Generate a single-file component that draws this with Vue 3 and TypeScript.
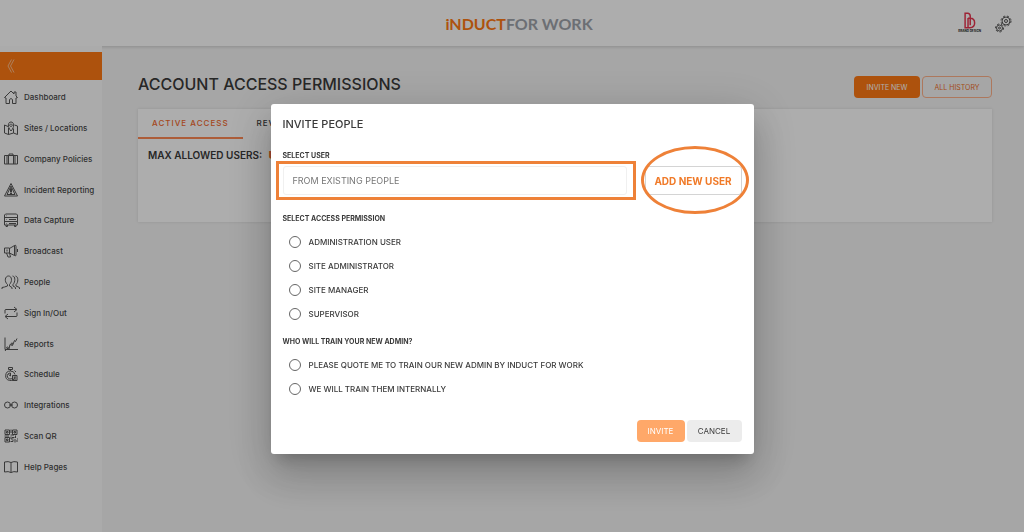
<script setup lang="ts">
import { ref } from 'vue'

interface NavItem {
  label: string
  icon: string
}

const navItems: NavItem[] = [
  { label: 'Dashboard', icon: 'home' },
  { label: 'Sites / Locations', icon: 'map' },
  { label: 'Company Policies', icon: 'case' },
  { label: 'Incident Reporting', icon: 'warning' },
  { label: 'Data Capture', icon: 'server' },
  { label: 'Broadcast', icon: 'megaphone' },
  { label: 'People', icon: 'people' },
  { label: 'Sign In/Out', icon: 'loop' },
  { label: 'Reports', icon: 'chart' },
  { label: 'Schedule', icon: 'stopwatch' },
  { label: 'Integrations', icon: 'link' },
  { label: 'Scan QR', icon: 'qr' },
  { label: 'Help Pages', icon: 'book' },
]

// Stroke paths on a 28 x 28 grid
const icons: Record<string, string> = {
  home: 'M1 15 L14 2 L20 8 V4 H24 V12 L27 15 L24 16 V27 H17 V19 Q14 15 11 19 V27 H4 V16 Z',
  map: 'M8 11 L1 8 V24 L9 27 L19 24 L27 27 V10 L21 8 M9 14 V27 M19 15 V24 M14 20 C6 11 8 2 14 2 C20 2 22 11 14 20 Z M14 6 A2.5 2.5 0 1 1 13.9 6',
  case: 'M1 7 H27 V24 H1 Z M6 7 V24 M9 7 V24 M19 7 V24 M22 7 V24 M10 7 V4 H18 V7',
  warning: 'M14 1 L27 26 H1 Z M14 6 L22 23 H6 Z M13 11 H15 V18 H13 Z M13 20 H15 V22 H13 Z',
  server: 'M3 2 H25 L27 4 V24 H1 V4 Z M1 9 H27 M1 17 H27 M5 5.5 H6 M5 13 H6 M5 21 H6 M10 13 H24 M10 21 H24 M4 24 V27 H7 V24 M21 24 V27 H24 V24',
  megaphone: 'M1 8 H11 V18 H1 Z M11 9 L21 3 V23 L11 18 M21 3 Q24 1 24 5 V22 Q24 25 21 23 M5 18 L8 26 H13 L11 18 M6 11 V15 M27 10 V16',
  people: 'M7 19 C0 13 2 2 9 2 C16 2 17 13 11 19 V22 M7 19 V22 L1 24 L-4 25 V28 M11 22 L16 25 V28 M17 2 C23 2 23 14 18 19 V22 L23 25 V28 M23 2 C29 3 29 15 24 19 V22 L31 25 V28',
  loop: 'M2 15 V8 Q2 7 4 7 H25 M20 2 L26 7 L20 12 M26 13 V20 Q26 21 24 21 H3 M8 16 L2 21 L8 26',
  chart: 'M2 1 V25 H28 M2 28 L6 23 L10 24 L12 15 L17 17 L21 7 L23 9 L26 3 M7 20 A1.5 1.5 0 1 1 6.9 20 M16 12 A1.5 1.5 0 1 1 15.9 12',
  stopwatch: 'M9 1 H17 V5 H9 Z M13 5 V8 M13 8 A9.5 9.5 0 1 0 22 20 M13 8 A9 9 0 0 1 22 15 M13 12 V18 L9 15 M13 12 A6 6 0 1 0 17 22 M17 17 H26 V27 H17 Z M19 20 H24 M19 24 H24 M21 7 L24 10',
  link: 'M7 8 A6 6 0 1 0 13 14 A6 6 0 0 0 7 8 M21 8 A6 6 0 1 0 27 14 A6 6 0 0 0 21 8 M10 14 H18',
  qr: 'M2 2 H11 V11 H2 Z M17 2 H26 V11 H17 Z M2 17 H11 V26 H2 Z M5 5 H8 V8 H5 Z M20 5 H23 V8 H20 Z M5 20 H8 V23 H5 Z M14 1 V8 M13 12 H20 M23 13 V18 M1 14 H10 M14 15 V20 H19 M13 25 H18 V22 M22 20 V27 M24 24 H28 M26 20 H28 M16 17 H21',
  book: 'M14 5 Q9 2 1 4 V24 Q9 22 14 25 Q19 22 27 24 V4 Q19 2 14 5 V25',
}

const roles: string[] = ['ADMINISTRATION USER', 'SITE ADMINISTRATOR', 'SITE MANAGER', 'SUPERVISOR']
const trainers: string[] = [
  'PLEASE QUOTE ME TO TRAIN OUR NEW ADMIN BY INDUCT FOR WORK',
  'WE WILL TRAIN THEM INTERNALLY',
]

const user = ref('')
const role = ref('')
const trainer = ref('')
</script>

<template>
  <div class="page">
    <header class="topbar">
      <span></span>
      <a class="brand" href="#"><span class="brand-main">iNDUCT</span>FOR WORK</a>
      <div class="account">
        <a class="client" href="#">
          <svg viewBox="0 0 30 46" width="11" height="17" aria-hidden="true">
            <path d="M11 43 H3 V3 H11 Q17 4 17 11 V36 M11 16 V43 H16 Q29 42 29 30 Q29 17 17 17 H11" />
          </svg>
          <span>BRAND DESIGN</span>
        </a>
        <button class="gear" type="button" aria-label="Settings">
          <svg viewBox="0 0 34 34" width="17" height="17" aria-hidden="true">
            <circle class="teeth" cx="22" cy="12" r="10" />
            <circle cx="22" cy="12" r="8" />
            <circle cx="22" cy="12" r="3" />
            <circle class="teeth" cx="9" cy="26" r="8" />
            <circle cx="9" cy="26" r="6" />
            <circle cx="9" cy="26" r="2" />
          </svg>
        </button>
      </div>
    </header>

    <div class="body">
      <aside class="sidebar">
        <button class="collapse" type="button" aria-label="Collapse menu">
          <svg viewBox="0 0 16 28" width="8" height="14" aria-hidden="true">
            <path d="M9 1 L2 14 L9 27 M14 1 L7 14 L14 27" />
          </svg>
        </button>
        <nav class="nav">
          <a v-for="item in navItems" :key="item.label" href="#">
            <svg viewBox="0 0 28 28" width="14" height="14" aria-hidden="true"><path :d="icons[item.icon]" /></svg>
            <span>{{ item.label }}</span>
          </a>
        </nav>
      </aside>

      <main class="main">
        <div class="heading">
          <h1>ACCOUNT ACCESS PERMISSIONS</h1>
          <div class="heading-actions">
            <button class="solid" type="button">INVITE NEW</button>
            <button class="outline" type="button">ALL HISTORY</button>
          </div>
        </div>
        <section class="card">
          <div class="tabs">
            <button class="tab active" type="button">ACTIVE ACCESS</button>
            <button class="tab" type="button">REV</button>
          </div>
          <p class="limit">MAX ALLOWED USERS: <b>U</b></p>
        </section>
      </main>
    </div>

    <div class="overlay">
      <form class="modal" role="dialog" aria-labelledby="invite-title" @submit.prevent>
        <h2 id="invite-title">INVITE PEOPLE</h2>
        <label class="caption" for="user">SELECT USER</label>
        <div class="user-row">
          <div class="field">
            <input id="user" v-model="user" type="text" placeholder="FROM EXISTING PEOPLE" />
            <span class="ring"></span>
          </div>
          <div class="add">
            <button type="button">ADD NEW USER</button>
            <span class="oval"></span>
          </div>
        </div>
        <fieldset>
          <legend class="caption">SELECT ACCESS PERMISSION</legend>
          <label v-for="item in roles" :key="item" class="option">
            <input v-model="role" type="radio" name="role" :value="item" />{{ item }}
          </label>
        </fieldset>
        <fieldset>
          <legend class="caption">WHO WILL TRAIN YOUR NEW ADMIN?</legend>
          <label v-for="item in trainers" :key="item" class="option">
            <input v-model="trainer" type="radio" name="trainer" :value="item" />{{ item }}
          </label>
        </fieldset>
        <div class="actions">
          <button class="invite" type="submit">INVITE</button>
          <button class="cancel" type="button">CANCEL</button>
        </div>
      </form>
    </div>
  </div>
</template>

<style>
body {
  margin: 0;
}
</style>

<style scoped>
.page {
  min-height: 100vh;
  display: flex;
  flex-direction: column;
  background: #f5f5f5;
  color: #3a3a3a;
  font-family: Inter, "Open Sans", sans-serif;
  font-size: 9px;
}
.page * {
  box-sizing: border-box;
}
button,
input {
  font: inherit;
  color: inherit;
}
button {
  padding: 0;
  border: 0;
  background: none;
}
a {
  color: inherit;
  text-decoration: none;
}
svg {
  display: block;
  fill: none;
  stroke: currentColor;
  overflow: visible;
}

.topbar {
  height: 46px;
  display: grid;
  grid-template-columns: 1fr auto 1fr;
  align-items: center;
  padding: 0 12px 0 26px;
  background: #fff;
  box-shadow: 0 1px 3px rgba(0, 0, 0, 0.16);
}
.brand {
  color: #a0a4ab;
  font-family: Lato, sans-serif;
  font-size: 16px;
  font-weight: 700;
}
.brand-main {
  color: #ff7a14;
}
.account {
  display: flex;
  justify-content: flex-end;
  align-items: center;
  gap: 14px;
}
.client {
  display: flex;
  flex-direction: column;
  align-items: center;
  color: #222;
  font-size: 3px;
  font-weight: 700;
  line-height: 5px;
}
.client svg {
  stroke: #e8344e;
  stroke-width: 4;
}
.gear svg {
  stroke: #555;
  stroke-width: 2;
}
.gear .teeth {
  stroke-width: 2;
  stroke-dasharray: 4 4;
}

.body {
  flex: 1;
  display: flex;
}
.sidebar {
  width: 102px;
  flex: none;
  padding-top: 6px;
  background: #fdfdfd;
}
.collapse {
  width: 100%;
  height: 28px;
  display: flex;
  align-items: center;
  padding-left: 7px;
  background: #ff7a14;
  color: #fff;
}
.nav {
  height: 400px;
  margin-top: 2px;
  display: grid;
  grid-auto-rows: 1fr;
}
.nav a {
  display: flex;
  align-items: center;
  gap: 6px;
  padding-left: 4px;
  color: #484848;
  font-size: 8px;
  font-weight: 500;
  white-space: nowrap;
}
.nav svg {
  stroke: #555;
  stroke-width: 2;
}

.main {
  flex: 1;
  padding: 27px 32px 0 36px;
}
.heading {
  display: flex;
  justify-content: space-between;
  align-items: flex-start;
}
h1,
h2,
p {
  margin: 0;
}
h1 {
  font-size: 16px;
  font-weight: 500;
  line-height: 22px;
}
.heading-actions {
  display: flex;
  gap: 2px;
  padding-top: 3px;
}
.heading-actions button {
  height: 22px;
  border-radius: 4px;
  font-size: 7px;
}
.heading-actions .solid {
  width: 66px;
  background: #ff7a14;
  color: #fff;
}
.heading-actions .outline {
  width: 70px;
  border: 1px solid #ffb28a;
  color: #f07028;
}
.card {
  min-height: 113px;
  margin-top: 11px;
  background: #fff;
  box-shadow: 0 0 3px rgba(0, 0, 0, 0.12);
}
.tabs {
  display: flex;
}
.tab {
  height: 30px;
  padding: 0 14px;
  border-bottom: 2px solid transparent;
  font-size: 8px;
  font-weight: 500;
  letter-spacing: 1px;
  white-space: nowrap;
}
.tab.active {
  border-color: #ff8a55;
  color: #f26a2e;
}
.limit {
  padding: 8px 10px;
  font-size: 10px;
  font-weight: 600;
  line-height: 16px;
}
.limit b {
  margin-left: 4px;
  color: #f26a2e;
}

.overlay {
  position: fixed;
  inset: 0;
  padding-top: 104px;
  background: rgba(0, 0, 0, 0.32);
}
.modal {
  width: 483px;
  margin: 0 auto;
  padding: 12px;
  border-radius: 3px;
  background: #fff;
  box-shadow:
    0 11px 15px -7px rgba(0, 0, 0, 0.2),
    0 24px 38px 3px rgba(0, 0, 0, 0.14),
    0 9px 46px 8px rgba(0, 0, 0, 0.12);
}
h2 {
  font-size: 11px;
  font-weight: 500;
  line-height: 16px;
}
.caption {
  display: block;
  padding: 0;
  font-size: 7px;
  font-weight: 700;
  line-height: 12px;
}
.modal > .caption {
  margin-top: 18px;
}
.user-row {
  display: flex;
  gap: 18px;
  margin: 4px 0 18px;
}
.field,
.add {
  position: relative;
  height: 29px;
}
.field {
  flex: 1;
}
.field input {
  width: 100%;
  height: 100%;
  padding: 0 9px;
  border: 1px solid #f0f0f0;
  border-radius: 3px;
  background: #fff;
}
.field input::placeholder {
  color: #777;
  opacity: 1;
}
.ring {
  position: absolute;
  inset: -5px -9px -5px -7px;
  border: 3px solid #ee8138;
  pointer-events: none;
}
.add button {
  width: 97px;
  height: 100%;
  border: 1px solid #d4d4d4;
  border-radius: 3px;
  color: #f07a28;
  font-size: 10px;
  font-weight: 700;
}
.oval {
  position: absolute;
  inset: -20px -7px -19px -4px;
  border: 3px solid #ee8138;
  border-radius: 50%;
  pointer-events: none;
}
fieldset {
  min-width: 0;
  margin: 0 0 10px;
  padding: 0;
  border: 0;
}
fieldset .caption {
  margin-bottom: 5px;
}
.option {
  display: flex;
  align-items: center;
  gap: 8px;
  height: 24px;
  padding-left: 6px;
  font-size: 8px;
  font-weight: 500;
}
.option input {
  appearance: none;
  width: 12px;
  height: 12px;
  margin: 0;
  border: 1px solid #666;
  border-radius: 50%;
}
.option input:checked {
  border: 4px solid #ff7a14;
}
.actions {
  display: flex;
  justify-content: flex-end;
  gap: 2px;
  margin-top: 19px;
}
.actions button {
  height: 22px;
  border-radius: 4px;
  font-size: 8px;
}
.actions .invite {
  width: 48px;
  background: #ffa869;
  color: #fff;
}
.actions .cancel {
  width: 55px;
  background: #ececec;
}
</style>
